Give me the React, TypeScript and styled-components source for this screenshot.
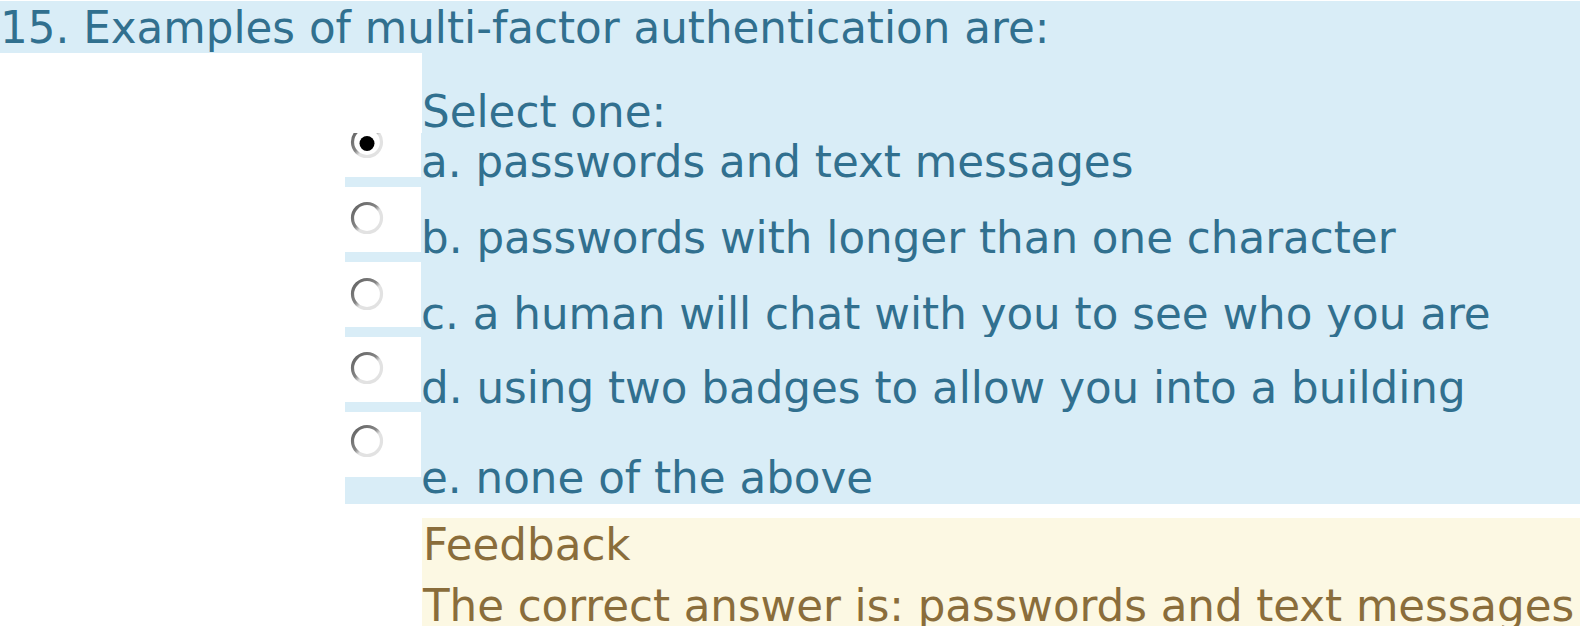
import styled, { createGlobalStyle } from "styled-components";

const GlobalStyle = createGlobalStyle`
  html, body {
    margin: 0;
    padding: 0;
    background: #fff;
  }
  body {
    font-family: "DejaVu Sans", "Noto Sans", sans-serif;
    font-size: 43.6px;
    line-height: 1.164;
    overflow: hidden;
  }
`;

const Page = styled.div`
  width: 1580px;
  height: 626px;
  padding-top: 1px;
  box-sizing: border-box;
  overflow: hidden;
  white-space: nowrap;
`;

const QuestionText = styled.div`
  height: 52px;
  padding-top: 2px;
  box-sizing: border-box;
  background: #d9edf7;
  color: #31708f;
`;

const Answer = styled.div`
  display: flex;
  padding-left: 345px;
`;

const Options = styled.div`
  flex: 1;
  display: flex;
  flex-direction: column;
`;

const PromptRow = styled.div`
  display: flex;
  height: 80px;
`;

const RadioSpacer = styled.div`
  width: 77px;
  flex: none;
  background: #fff;
`;

const Prompt = styled.div`
  flex: 1;
  padding-top: 34px;
  background: #d9edf7;
  color: #31708f;
`;

const OptionRow = styled.div<{ $height: number }>`
  display: flex;
  align-items: flex-start;
  height: ${(p) => p.$height}px;
  background: #d9edf7;
`;

const RadioCell = styled.div<{ $height: number; $offset: number }>`
  width: 76px;
  flex: none;
  height: ${(p) => p.$height}px;
  padding-top: ${(p) => Math.max(p.$offset, 0)}px;
  padding-left: 5px;
  box-sizing: border-box;
  background: #fff;
  overflow: hidden;

  & svg {
    display: block;
    margin-top: ${(p) => Math.min(p.$offset, 0)}px;
  }
`;

const Label = styled.label<{ $pad: number }>`
  flex: 1;
  padding-top: ${(p) => p.$pad}px;
  color: #31708f;
`;

const Feedback = styled.div`
  margin: 14px 0 0 422px;
  padding: 2px 0 0 1px;
  background: #fcf8e3;
  color: #8a6d3b;
  height: 120px;
`;

const RightAnswer = styled.div`
  margin-top: 10px;
  letter-spacing: -0.06px;
`;

// round radio drawn as a ring that is dark on the upper left, pale on the lower right
const Radio = ({ checked }: { checked?: boolean }) => (
  <svg width="34" height="34" viewBox="0 0 34 34">
    <defs>
      <linearGradient id="ring" x1="0" y1="0" x2="1" y2="1">
        <stop offset="0" stopColor="#5f5f5f" />
        <stop offset="0.45" stopColor="#858585" />
        <stop offset="0.58" stopColor="#e2e2e2" />
        <stop offset="1" stopColor="#e2e2e2" />
      </linearGradient>
    </defs>
    <circle cx="17" cy="17" r="14.5" fill="#fff" stroke="url(#ring)" strokeWidth="3.2" />
    {checked && <circle cx="17" cy="18.5" r="7.5" fill="#000" />}
  </svg>
);

const options = [
  { text: "a. passwords and text messages", row: 54, cell: 44, pad: 4, radio: -8, checked: true },
  { text: "b. passwords with longer than one character", row: 75, cell: 65, pad: 26, radio: 14 },
  { text: "c. a human will chat with you to see who you are", row: 75, cell: 65, pad: 27, radio: 15 },
  { text: "d. using two badges to allow you into a building", row: 75, cell: 65, pad: 26, radio: 14 },
  { text: "e. none of the above", row: 92, cell: 65, pad: 41, radio: 12 },
];

export default function App() {
  return (
    <>
      <GlobalStyle />
      <Page>
        <QuestionText>15. Examples of multi-factor authentication are:</QuestionText>
        <Answer>
          <Options>
            <PromptRow>
              <RadioSpacer />
              <Prompt>Select one:</Prompt>
            </PromptRow>
            {options.map((o) => (
              <OptionRow key={o.text} $height={o.row}>
                <RadioCell $height={o.cell} $offset={o.radio}>
                  <Radio checked={o.checked} />
                </RadioCell>
                <Label $pad={o.pad}>{o.text}</Label>
              </OptionRow>
            ))}
          </Options>
        </Answer>
        <Feedback>
          Feedback
          <RightAnswer>The correct answer is: passwords and text messages</RightAnswer>
        </Feedback>
      </Page>
    </>
  );
}
